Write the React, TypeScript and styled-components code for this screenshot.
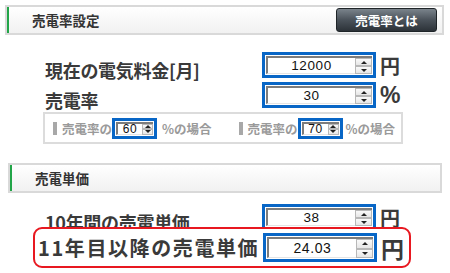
import styled, { createGlobalStyle } from "styled-components";

const Global = createGlobalStyle`
    html, body {
        margin: 0;
        padding: 0;
        background: #fff;
    }
    body {
        font-family: "Noto Sans CJK JP", "Noto Sans", sans-serif;
        color: #333;
    }
`;

const Page = styled.div`
    width: 450px;
    height: 273px;
    overflow: hidden;
    padding-top: 5px;
    box-sizing: border-box;
`;

// green-edged section title bars
const SectionBar = styled.div<{ $left: number; $right: number }>`
    margin: 0 ${p => p.$right}px 0 ${p => p.$left}px;
    height: 30px;
    box-sizing: border-box;
    border: 2px solid #d9d9d9;
    box-shadow: inset 2px 0 0 #22a548;
    background: linear-gradient(#ffffff, #f1f1f1);
    display: flex;
    align-items: center;
    justify-content: space-between;
    padding: 0 5px 0 25px;
`;
const SectionTitle = styled.span`
    font-size: 13.5px;
    font-weight: bold;
    color: #333;
`;
const DarkButton = styled.button`
    width: 101px;
    height: 24px;
    border: 1px solid #1e2428;
    border-radius: 3px;
    background: linear-gradient(#7a838b, #4a525a 50%, #2c3238);
    color: #fff;
    font-family: inherit;
    font-size: 12.5px;
    font-weight: bold;
    padding: 0;
`;

const Rows = styled.div`
    display: flex;
    flex-direction: column;
    gap: 4px;
    padding: 17px 0 0 45px;
`;
const Row = styled.div`
    display: flex;
    align-items: center;
    height: 26px;
`;
const Label = styled.span`
    width: 217px;
    font-size: 18px;
    letter-spacing: -0.3px;
    font-weight: bold;
    color: #3a3a3a;
    white-space: nowrap;
    padding-top: 9px;
`;
const Unit = styled.span<{ $big?: boolean }>`
    margin-left: 4px;
    font-size: ${p => (p.$big ? "23px" : "20px")};
    font-weight: bold;
    color: #3a3a3a;
    font-family: "Liberation Sans", "Noto Sans CJK JP", sans-serif;
`;

// spinner input, windows style
const SpinBox = styled.div<{ $w: number; $h: number }>`
    width: ${p => p.$w}px;
    height: ${p => p.$h}px;
    flex: none;
    box-sizing: border-box;
    border: 3px solid #0866c6;
    background: #fff;
    display: flex;
    padding: 1px;
`;
const Field = styled.div<{ $fs: number }>`
    flex: 1;
    border-top: 2px solid #7c7c7c;
    border-left: 2px solid #7c7c7c;
    border-bottom: 1px solid #e4e4e4;
    display: flex;
    align-items: center;
    justify-content: center;
    font-family: "Liberation Sans", Arial, sans-serif;
    font-size: ${p => p.$fs}px;
    font-weight: normal;
    letter-spacing: 0.6px;
    color: #111;
`;
const Spinner = styled.div<{ $w: number }>`
    width: ${p => p.$w}px;
    display: flex;
    flex-direction: column;
    border-top: 2px solid #7c7c7c;
`;
const SpinBtn = styled.div<{ $down?: boolean }>`
    flex: 1;
    box-sizing: border-box;
    border: 1px solid #b8b8b8;
    background: linear-gradient(#fafafa, #e6e6e6);
    display: flex;
    align-items: center;
    justify-content: center;
    &::after {
        content: "";
        border-left: 3px solid transparent;
        border-right: 3px solid transparent;
        ${p => (p.$down ? "border-top: 3px solid #222;" : "border-bottom: 3px solid #222;")}
    }
`;

function NumInput({ value, w, h, fs, sw }: { value: string; w: number; h: number; fs: number; sw: number }) {
    return (
        <SpinBox $w={w} $h={h}>
            <Field $fs={fs}>{value}</Field>
            <Spinner $w={sw}>
                <SpinBtn />
                <SpinBtn $down />
            </Spinner>
        </SpinBox>
    );
}

const CaseBox = styled.div`
    width: 360px;
    height: 32px;
    box-sizing: border-box;
    margin-left: -2px;
    border: 2px solid #dcdcdc;
    display: flex;
    align-items: center;
    padding-left: 8px;
    gap: 27px;
`;
const CaseItem = styled.div`
    display: flex;
    align-items: center;
    font-size: 12.5px;
    font-weight: bold;
    color: #9a9a9a;
    white-space: nowrap;
`;
const Mark = styled.span`
    width: 4px;
    height: 13px;
    background: #a8a8a8;
    margin-right: 5px;
`;
const CaseText = styled.span<{ $gap?: number }>`
    margin-left: ${p => p.$gap ?? 0}px;
`;

const Section2 = styled.div`
    margin-top: 19px;
`;
const PriceRows = styled.div`
    padding: 11px 0 0 45px;
`;
const Highlight = styled.div`
    position: relative;
    margin: -3px 0 0 -12px;
    width: 378px;
    height: 41px;
    box-sizing: border-box;
    border: 2px solid #e81820;
    border-radius: 9px;
    background: #fff;
    display: flex;
    align-items: center;
    padding-left: 3px;
`;
const BigLabel = styled.span`
    width: 225px;
    flex: none;
    font-size: 20px;
    font-weight: bold;
    letter-spacing: 1.6px;
    white-space: nowrap;
    color: #3a3a3a;
`;

export default function App() {
    return (
        <Page>
            <Global />
            <SectionBar $left={5} $right={6}>
                <SectionTitle>売電率設定</SectionTitle>
                <DarkButton>売電率とは</DarkButton>
            </SectionBar>

            <Rows>
                <Row>
                    <Label>現在の電気料金[月]</Label>
                    <NumInput value="12000" w={114} h={26} fs={13.5} sw={17} />
                    <Unit>円</Unit>
                </Row>
                <Row>
                    <Label>売電率</Label>
                    <NumInput value="30" w={114} h={26} fs={13.5} sw={17} />
                    <Unit $big>%</Unit>
                </Row>
                <CaseBox>
                    <CaseItem>
                        <Mark />
                        売電率の
                        <NumInput value="60" w={45} h={21} fs={12} sw={11} />
                        <CaseText $gap={5}>%の場合</CaseText>
                    </CaseItem>
                    <CaseItem>
                        <Mark />
                        売電率の
                        <NumInput value="70" w={45} h={21} fs={12} sw={11} />
                        <CaseText $gap={3}>%の場合</CaseText>
                    </CaseItem>
                </CaseBox>
            </Rows>

            <Section2>
                <SectionBar $left={8} $right={8}>
                    <SectionTitle>売電単価</SectionTitle>
                </SectionBar>
                <PriceRows>
                    <Row>
                        <Label>10年間の売電単価</Label>
                        <NumInput value="38" w={114} h={26} fs={13.5} sw={17} />
                        <Unit>円</Unit>
                    </Row>
                    <Highlight>
                        <BigLabel>11年目以降の売電単価</BigLabel>
                        <NumInput value="24.03" w={114} h={29} fs={14} sw={17} />
                        <Unit $big>円</Unit>
                    </Highlight>
                </PriceRows>
            </Section2>
        </Page>
    );
}
